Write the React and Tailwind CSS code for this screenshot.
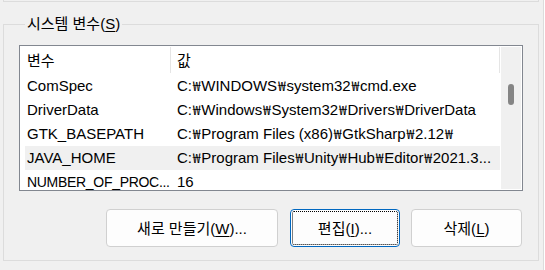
function Path({ text }) {
  const parts = text.split("₩");
  return (
    <>
      {parts.map((p, i) => (
        <span key={i}>
          {i > 0 && (
            <span className="inline-block w-[9.3px] text-center font-['Noto_Sans_CJK_KR',sans-serif] text-[14px] leading-none">₩</span>
          )}
          {p}
        </span>
      ))}
    </>
  );
}

export default function App() {
  const rows = [
    ["ComSpec", "C:₩WINDOWS₩system32₩cmd.exe", false],
    ["DriverData", "C:₩Windows₩System32₩Drivers₩DriverData", false],
    ["GTK_BASEPATH", "C:₩Program Files (x86)₩GtkSharp₩2.12₩", false],
    ["JAVA_HOME", "C:₩Program Files₩Unity₩Hub₩Editor₩2021.3...", true],
  ];
  return (
    <div className="w-[544px] h-[270px] bg-[#f0f0f0] border-r border-[#dcdcdc] overflow-hidden text-black font-['Liberation_Sans','Noto_Sans_CJK_KR',sans-serif] text-[15px]">
      <div className="ml-[3px] w-[536px] h-[2px] border-x border-b border-[#dcdcdc]" />
      <fieldset className="mt-[12px] ml-[3px] w-[536px] border border-[#dcdcdc] px-[15px] pb-[13px]">
        <legend className="ml-[6px] px-[2px] leading-[20px] text-[15px]">
          시스템 변수(<u className="underline-offset-2">S</u>)
        </legend>
        <div className="mt-[11px] w-[504px] h-[146px] border border-[#828790] bg-white flex overflow-hidden">
          <div className="w-[480px] flex flex-col">
            <div className="h-[28px] shrink-0 flex items-center">
              <div className="w-[151px] h-[26px] pl-[7px] border-r border-[#e5e5e5] flex items-center leading-none">변수</div>
              <div className="w-[329px] h-[26px] pl-[6px] border-r border-[#e5e5e5] flex items-center leading-none">값</div>
            </div>
            {rows.map(([n, v, sel]) => (
              <div
                key={n}
                className={
                  "ml-[5px] w-[475px] h-[24px] shrink-0 flex items-center whitespace-nowrap " +
                  (sel ? "bg-[#f0f0f0]" : "")
                }
              >
                <div className="w-[146px] pl-[2px] overflow-hidden">{n}</div>
                <div className="w-[329px] pl-[6px] overflow-hidden">
                  <Path text={v} />
                </div>
              </div>
            ))}
            <div className="ml-[5px] w-[475px] h-[24px] shrink-0 flex items-center whitespace-nowrap">
              <div className="w-[146px] pl-[2px] overflow-hidden text-[14px] tracking-[-0.3px]">NUMBER_OF_PROC...</div>
              <div className="w-[329px] pl-[6px] overflow-hidden">16</div>
            </div>
          </div>
          <div className="ml-[1px] mt-[1px] w-[20px] h-[142px] bg-[#f0f0f0] flex flex-col items-center pt-[37px]">
            <div className="w-[6px] h-[21px] rounded-[3px] bg-[#858585]" />
          </div>
        </div>
        <div className="mt-[18px] flex">
          <button className="ml-[87px] w-[172px] h-[38px] rounded-[4px] border border-[#d0d0d0] bg-[#fdfdfd] text-[15px] leading-none">
            새로 만들기(<u className="underline-offset-2">W</u>)...
          </button>
          <button className="ml-[12px] w-[110px] h-[38px] rounded-[4px] border border-[#0067c0] bg-[#fdfdfd] text-[15px] leading-none outline-1 outline-dotted outline-black outline-offset-[-3px]">
            편집(<u className="underline-offset-2">I</u>)...
          </button>
          <button className="ml-[11px] w-[111px] h-[38px] rounded-[4px] border border-[#d0d0d0] bg-[#fdfdfd] text-[15px] leading-none">
            삭제(<u className="underline-offset-2">L</u>)
          </button>
        </div>
      </fieldset>
    </div>
  );
}
